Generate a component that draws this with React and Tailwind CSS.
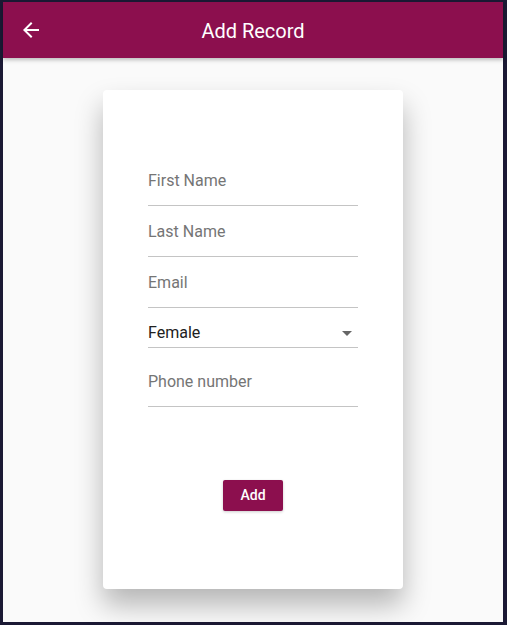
import { ArrowLeft } from "lucide-react";

function Field({ label, className = "" }) {
  return (
    <div className={`border-b border-[#c4c4c4] text-[16px] leading-6 text-[#757575] ${className}`}>
      {label}
    </div>
  );
}

export default function App() {
  return (
    <div
      className="h-[625px] w-[507px] bg-[#1b1934] pt-[2px] pl-[3px] pr-[4px] pb-[3px]"
      style={{ fontFamily: "Roboto, 'Liberation Sans', sans-serif" }}
    >
      <div className="flex h-full flex-col bg-[#fafafa]">
        <header className="relative z-10 flex h-[56px] items-center bg-[#8c0f4e] shadow-[0_2px_4px_rgba(0,0,0,0.25)]">
          <svg className="ml-[16px] h-6 w-6" viewBox="0 0 24 24" fill="white">
            <path d="M20 11H7.83l5.59-5.59L12 4l-8 8 8 8 1.41-1.41L7.83 13H20v-2z" />
          </svg>
          <h1 className="absolute left-0 right-0 mt-[1px] text-center text-[20px] font-normal text-white">Add Record</h1>
        </header>

        <div className="flex-1 pt-[32px]">
          <div className="mx-auto h-[499px] w-[300px] rounded-[4px] bg-white px-[45px] pt-[65px] shadow-[0_16px_28px_rgba(0,0,0,0.28)]">
            <Field label="First Name" className="pt-[14px] pb-[12px]" />
            <Field label="Last Name" className="pt-[14px] pb-[12px]" />
            <Field label="Email" className="pt-[14px] pb-[12px]" />
            <div className="flex items-center justify-between border-b border-[#c4c4c4] pt-[13px] pb-[2px] text-[16px] leading-6 text-[#212121]">
              <span>Female</span>
              <svg className="mr-[6px] h-[5px] w-[10px]" viewBox="0 0 10 5" fill="#666">
                <path d="M0 0l5 5 5-5z" />
              </svg>
            </div>
            <Field label="Phone number" className="pt-[22px] pb-[12px]" />
            <div className="mt-[73px] flex justify-center">
              <button className="h-[31px] w-[60px] rounded-[2px] bg-[#8c0f4e] text-[14px] font-medium text-white shadow-[0_1px_3px_rgba(0,0,0,0.2)]">
                Add
              </button>
            </div>
          </div>
        </div>
      </div>
    </div>
  );
}
